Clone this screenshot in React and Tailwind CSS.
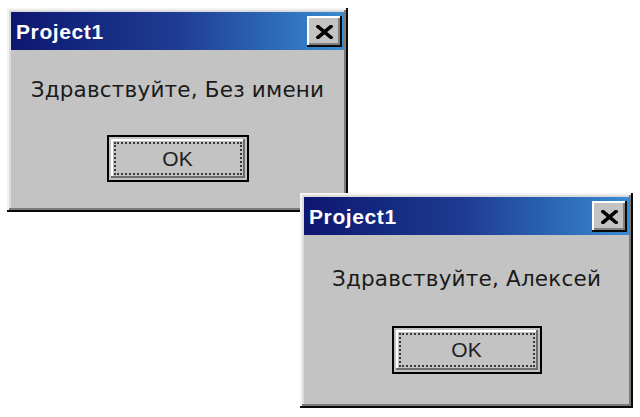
import React from 'react';

const FONT = { fontFamily: '"Liberation Sans", "DejaVu Sans", Arial, sans-serif' };
const MSG_FONT = { fontFamily: '"DejaVu Sans", "Liberation Sans", Arial, sans-serif' };

function CloseButton() {
  return (
    <div className="flex h-[31px] w-[35px] items-center justify-center bg-[#c3c3c3] shadow-[inset_-2px_-2px_0_#0a0a0a,inset_2px_2px_0_#ffffff,inset_-4px_-4px_0_#808080]">
      <svg width="17" height="14" viewBox="0 0 17 14" className="mt-[2px]">
        <path d="M2 1.5 L15 12.5 M15 1.5 L2 12.5" stroke="#000" strokeWidth="3.6" strokeLinecap="square" />
      </svg>
    </div>
  );
}

function OkButton({ width, height }) {
  return (
    <div
      className="flex items-center justify-center bg-[#c3c3c3] border-2 border-black p-[2px]"
      style={{ width, height }}
    >
      <div className="flex h-full w-full items-center justify-center p-[3px] shadow-[inset_-2px_-2px_0_#6e6e6e,inset_2px_2px_0_#ffffff]">
        <div className="flex h-full w-full items-center justify-center border-2 border-dotted border-[#3a3a3a]">
          <span className="text-[21px] leading-[22px] text-[#1e1e1e]">OK</span>
        </div>
      </div>
    </div>
  );
}

function MessageBox({ left, top, width, height, titleH, message, textPad, gap, btnW, btnH }) {
  return (
    <div
      className="absolute flex flex-col bg-[#c3c3c3] p-[4px] shadow-[inset_-2px_-2px_0_#0a0a0a,inset_2px_2px_0_#f4f4f4,inset_-4px_-4px_0_#7a7a7a,inset_4px_4px_0_#dcdcdc]"
      style={{ left, top, width, height }}
    >
      <div
        className="flex items-center justify-between bg-linear-to-r from-[#0e1670] via-[#1f3c92] to-[#3a8cd0] pl-[5px] pr-[2px]"
        style={{ height: titleH }}
      >
        <span className="text-[21px] font-bold leading-none tracking-[0.6px] text-white">Project1</span>
        <CloseButton />
      </div>
      <div className="flex flex-col items-center" style={{ paddingTop: textPad, gap }}>
        <div className="text-[21.5px] leading-[22px] tracking-[0.2px] text-[#1a1a1a]" style={MSG_FONT}>
          {message}
        </div>
        <OkButton width={btnW} height={btnH} />
      </div>
    </div>
  );
}

export default function App() {
  return (
    <div className="relative h-[417px] w-[640px] overflow-hidden bg-white" style={FONT}>
      <MessageBox
        left={7}
        top={8}
        width={341}
        height={204}
        titleH={38}
        message="Здравствуйте, Без имени"
        textPad={29}
        gap={34}
        btnW={142}
        btnH={47}
      />
      <MessageBox
        left={300}
        top={193}
        width={333}
        height={215}
        titleH={38}
        message="Здравствуйте, Алексей"
        textPad={33}
        gap={36}
        btnW={150}
        btnH={48}
      />
    </div>
  );
}
